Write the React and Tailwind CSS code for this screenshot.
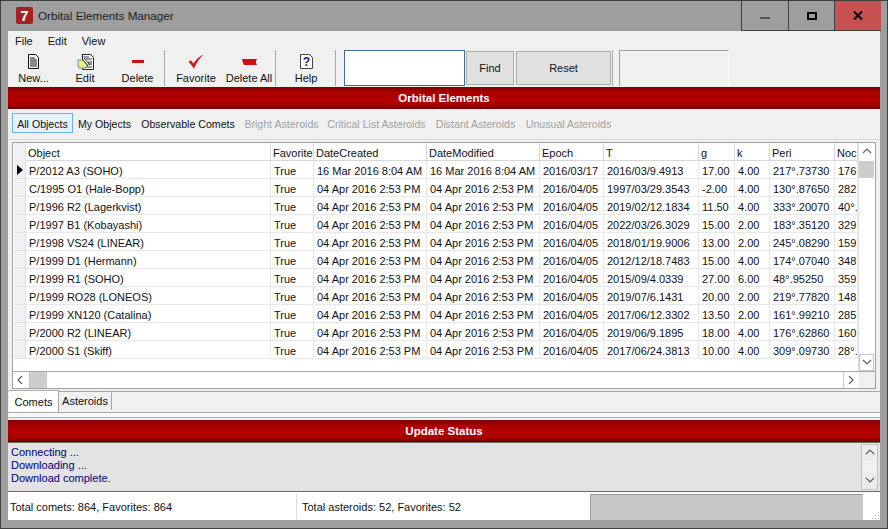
import React from "react";

const columns = [
  { name: "Object", w: "w-[245px]" },
  { name: "Favorite", w: "w-[43px]" },
  { name: "DateCreated", w: "w-[113px]" },
  { name: "DateModified", w: "w-[113px]" },
  { name: "Epoch", w: "w-[64px]" },
  { name: "T", w: "w-[95px]" },
  { name: "g", w: "w-[36px]" },
  { name: "k", w: "w-[35px]" },
  { name: "Peri", w: "w-[65px]" },
  { name: "Noc", w: "w-[23px]" },
];

const d = "04 Apr 2016 2:53 PM";
const rows = [
  ["P/2012 A3 (SOHO)", "True", "16 Mar 2016 8:04 AM", "16 Mar 2016 8:04 AM", "2016/03/17", "2016/03/9.4913", "17.00", "4.00", "217°.73730", "176"],
  ["C/1995 O1 (Hale-Bopp)", "True", d, d, "2016/04/05", "1997/03/29.3543", "-2.00", "4.00", "130°.87650", "282"],
  ["P/1996 R2 (Lagerkvist)", "True", d, d, "2016/04/05", "2019/02/12.1834", "11.50", "4.00", "333°.20070", "40°."],
  ["P/1997 B1 (Kobayashi)", "True", d, d, "2016/04/05", "2022/03/26.3029", "15.00", "2.00", "183°.35120", "329"],
  ["P/1998 VS24 (LINEAR)", "True", d, d, "2016/04/05", "2018/01/19.9006", "13.00", "2.00", "245°.08290", "159"],
  ["P/1999 D1 (Hermann)", "True", d, d, "2016/04/05", "2012/12/18.7483", "15.00", "4.00", "174°.07040", "348"],
  ["P/1999 R1 (SOHO)", "True", d, d, "2016/04/05", "2015/09/4.0339", "27.00", "6.00", "48°.95250", "359"],
  ["P/1999 RO28 (LONEOS)", "True", d, d, "2016/04/05", "2019/07/6.1431", "20.00", "2.00", "219°.77820", "148"],
  ["P/1999 XN120 (Catalina)", "True", d, d, "2016/04/05", "2017/06/12.3302", "13.50", "2.00", "161°.99210", "285"],
  ["P/2000 R2 (LINEAR)", "True", d, d, "2016/04/05", "2019/06/9.1895", "18.00", "4.00", "176°.62860", "160"],
  ["P/2000 S1 (Skiff)", "True", d, d, "2016/04/05", "2017/06/24.3813", "10.00", "4.00", "309°.09730", "28°."],
];

const filters = [
  { name: "My Objects", w: "w-[63px]", on: true },
  { name: "Observable Comets", w: "w-[104px]", on: true },
  { name: "Bright Asteroids", w: "w-[83px]" },
  { name: "Critical List Asteroids", w: "w-[107px]" },
  { name: "Distant Asteroids", w: "w-[91px]" },
  { name: "Unusual Asteroids", w: "w-[95px]" },
];

const NewIcon = () => (
  <svg width="13" height="15" viewBox="0 0 13 15">
    <path d="M1.5 0.5h7l3 3v11h-10z" fill="#fff" stroke="#111" />
    <path d="M3 4h5M3 6h7M3 8h7M3 10h7M3 12h7" stroke="#111" />
  </svg>
);

const EditIcon = () => (
  <svg width="17" height="16" viewBox="0 0 17 16">
    <path d="M5.5 0.5h8l3 3v12h-11z" fill="#fff" stroke="#222" />
    <path d="M7 3h5M9 5h6M11 8h4M11 10h4M9 13h6" stroke="#333" />
    <path d="M1 6h5l4 4v3l-3 1H2l-1-2z" fill="#f2ee80" stroke="#4f9a9a" />
    <path d="M5 5l6 7M7 4l6 7" stroke="#333" />
    <path d="M5 0l1 3" stroke="#222" />
  </svg>
);

const DashIcon = () => (
  <svg width="12" height="3" viewBox="0 0 12 3">
    <path d="M0 0h12v3H0z" fill="#cc1111" />
  </svg>
);

const CheckIcon = () => (
  <svg width="16" height="15" viewBox="0 0 16 15">
    <path d="M0.5 7.5l2.5-1 2.5 3C8 5.5 11 2.5 15.5 0.5 11.5 4 8.5 9 6 14.5z" fill="#d01818" />
  </svg>
);

const DeleteAllIcon = () => (
  <svg width="15" height="6" viewBox="0 0 15 6">
    <path d="M0 0h15l-1 2v2l1 2H2L1 4z" fill="#d01010" />
  </svg>
);

const HelpIcon = () => (
  <svg width="13" height="15" viewBox="0 0 13 15">
    <path d="M0.5 0.5h9l3 3v11h-12z" fill="#fffff0" stroke="#444" />
    <text x="6.5" y="12" textAnchor="middle" fontSize="12" fontWeight="700" fill="#14148c" fontFamily="Liberation Sans">?</text>
  </svg>
);

const Chevron = ({ dir }) => {
  const p = {
    up: "M1 6l4-4 4 4",
    down: "M1 2l4 4 4-4",
    left: "M6 1L2 5l4 4",
    right: "M2 1l4 4-4 4",
  }[dir];
  return (
    <svg width="10" height="10" viewBox="0 0 10 10" className="overflow-visible">
      <path d={p} fill="none" stroke="#606060" strokeWidth="1.2" />
    </svg>
  );
};

const ToolButton = ({ label, w, icon }) => (
  <div className={`${w} h-[37px] flex flex-col items-center shrink-0 whitespace-nowrap`}>
    <div className="h-[19px] mt-[2px] flex items-center justify-center">{icon}</div>
    <span className="mt-[1px] leading-[13px]">{label}</span>
  </div>
);

const Sep = () => <div className="w-[1px] h-[36px] bg-[#a8a8a8] shrink-0" />;

const RedBar = ({ title }) => (
  <div className="h-[22px] pt-[2px] shrink-0 flex items-center justify-center text-white font-bold text-[11.5px] bg-[linear-gradient(#7c0000,#ac0000_25%,#b40000_60%,#a80000_80%,#6e0000)]">
    {title}
  </div>
);

const App = () => {
  return (
    <div className="w-[888px] h-[529px] flex flex-col bg-[#9e9e9e] border border-[#3f3f3f] overflow-hidden font-['Liberation_Sans',sans-serif] text-[11px] text-[#111]">
      {/* title bar */}
      <div className="h-[30px] shrink-0 flex items-start">
        <div className="ml-[15px] mt-[6px] w-[17px] h-[17px] rounded-[2px] bg-[#a32020] text-white font-bold text-[15px] leading-[17px] text-center">
          7
        </div>
        <span className="ml-[5px] mt-[8px] text-[11.7px] leading-[14px] text-[#1c1c1c]">Orbital Elements Manager</span>
        <div className="ml-auto mr-[6px] flex h-[30px] border-b border-[#3f3f3f]">
          <div className="w-[48px] border-x border-[#3f3f3f] flex justify-center">
            <div className="mt-[16px] w-[10px] h-[2px] bg-[#555]" />
          </div>
          <div className="w-[46px] border-r border-[#3f3f3f] flex justify-center">
            <div className="mt-[11px] w-[10px] h-[8px] border-2 border-black" />
          </div>
          <div className="w-[46px] bg-[#c75050] flex justify-center">
            <svg className="mt-[10px]" width="10" height="9" viewBox="0 0 10 9">
              <path d="M1 0.5l8 8M9 0.5l-8 8" stroke="#000" strokeWidth="2" />
            </svg>
          </div>
        </div>
      </div>

      {/* client area */}
      <div className="mx-[7px] h-[489px] shrink-0 flex flex-col bg-[#f0f0f0]">
        <div className="h-[19px] shrink-0 flex items-center gap-[15px] pl-[7px] pt-[2px]">
          <span>File</span>
          <span>Edit</span>
          <span>View</span>
        </div>

        <div className="h-[37px] shrink-0 flex items-start">
          <ToolButton label="New..." w="w-[51px]" icon={<NewIcon />} />
          <ToolButton label="Edit" w="w-[52px]" icon={<EditIcon />} />
          <ToolButton label="Delete" w="w-[53px]" icon={<DashIcon />} />
          <Sep />
          <div className="w-[4px]" />
          <ToolButton label="Favorite" w="w-[54px]" icon={<CheckIcon />} />
          <ToolButton label="Delete All" w="w-[52px]" icon={<DeleteAllIcon />} />
          <Sep />
          <div className="w-[1px]" />
          <ToolButton label="Help" w="w-[58px]" icon={<HelpIcon />} />
          <Sep />
          <div className="w-[8px]" />
          <div className="w-[121px] h-[36px] bg-white border border-[#44708f] shrink-0" />
          <div className="ml-[1px] w-[48px] h-[34px] mt-[1px] pt-[1px] bg-[#e1e1e1] border border-[#adadad] flex items-center justify-center shrink-0">
            Find
          </div>
          <div className="ml-[2px] w-[95px] h-[34px] mt-[1px] bg-[#e1e1e1] border border-[#adadad] flex items-center justify-center shrink-0">
            Reset
          </div>
          <div className="ml-[1px]"><Sep /></div>
          <div className="ml-[6px] w-[110px] h-[36px] border-t border-l border-[#a0a0a0] border-r-white border-r shrink-0" />
        </div>

        <RedBar title="Orbital Elements" />

        {/* filter strip */}
        <div className="h-[31px] shrink-0 flex items-start pl-[4px] pt-[4px] text-[10.6px] text-[#a3a3a3] border-b border-[#d8d8d8] whitespace-nowrap">
          <div className="w-[61px] h-[20px] pt-[3px] shrink-0 bg-[#e5f1fb] border border-[#6eb0de] text-[#111] flex items-center justify-center">
            All Objects
          </div>
          {filters.map((f) => (
            <div key={f.name} className={`${f.w} h-[20px] pt-[3px] shrink-0 flex items-center justify-center ${f.on ? "text-[#111]" : ""}`}>
              {f.name}
            </div>
          ))}
        </div>

        {/* grid */}
        <div className="mx-[4px] mt-[2px] h-[247px] shrink-0 border border-[#a0a0a0] bg-white flex flex-col">
          <div className="flex flex-1 min-h-0">
            <div className="w-[845px] shrink-0">
              <div className="flex h-[18px]">
                <div className="w-[12px] shrink-0 bg-[#f0f0f0] border-r border-[#e0e0e0] ml-[1px]" />
                {columns.map((c) => (
                  <div key={c.name} className={`${c.w} shrink-0 bg-white border-r border-b border-[#d8d8d8] pl-[2px] leading-[20px] overflow-hidden whitespace-nowrap`}>
                    {c.name}
                  </div>
                ))}
              </div>
              {rows.map((r, i) => (
                <div key={r[0]} className="flex h-[18px]">
                  <div className="w-[12px] ml-[1px] shrink-0 bg-[#f0f0f0] border-r border-b border-[#e0e0e0] flex items-center justify-center">
                    {i === 0 && (
                      <svg width="6" height="10" viewBox="0 0 6 10">
                        <path d="M0 0l6 5-6 5z" fill="#000" />
                      </svg>
                    )}
                  </div>
                  {r.map((v, j) => (
                    <div key={j} className={`${columns[j].w} shrink-0 border-r border-b border-[#e8e8e8] pl-[3px] leading-[20px] overflow-hidden whitespace-nowrap`}>
                      {v}
                    </div>
                  ))}
                </div>
              ))}
            </div>
            <div className="w-[16px] shrink-0 flex flex-col border-l border-[#e0e0e0]">
              <div className="h-[18px] flex items-center justify-center bg-white"><Chevron dir="up" /></div>
              <div className="h-[17px] bg-[#cdcdcd]" />
              <div className="flex-1" />
              <div className="h-[17px] flex items-center justify-center border border-[#c8c8c8]"><Chevron dir="down" /></div>
            </div>
          </div>
          <div className="h-[17px] shrink-0 flex border-t border-[#a8a8a8]">
            <div className="w-[17px] flex items-center justify-center border-r border-[#c8c8c8]"><Chevron dir="left" /></div>
            <div className="w-[17px] bg-[#cdcdcd]" />
            <div className="flex-1" />
            <div className="w-[16px] flex items-center justify-center border-l border-[#c8c8c8]"><Chevron dir="right" /></div>
            <div className="w-[16px] bg-[#f0f0f0]" />
          </div>
        </div>

        {/* tabs */}
        <div className="mt-[2px] h-[22px] shrink-0 flex items-start border-t border-b border-[#a8a8a8]">
          <div className="w-[50px] h-[22px] -mt-[2px] ml-[1px] pt-[2px] bg-white border-r border-t border-[#a8a8a8] flex items-center justify-center">Comets</div>
          <div className="w-[53px] h-[18px] bg-[#f0f0f0] border-r border-[#a8a8a8] flex items-center justify-center">Asteroids</div>
        </div>
        <div className="h-[5px] shrink-0 bg-[#f8f8f8] border-b border-[#b0b0b0]" />
        <div className="h-[2px] shrink-0" />

        <RedBar title="Update Status" />

        {/* status log */}
        <div className="h-[50px] shrink-0 flex bg-[#e3e3e3] border-t border-b border-[#6a6a6a]">
          <div className="flex-1 pl-[3px] pt-[3px] text-[#000080] leading-[13px]">
            <div>Connecting ...</div>
            <div>Downloading ...</div>
            <div>Download complete.</div>
          </div>
          <div className="w-[17px] mr-[2px] mt-[1px] mb-[1px] shrink-0 flex flex-col bg-white border border-[#c4c4c4]">
            <div className="h-[16px] flex items-center justify-center bg-[#ececec]"><Chevron dir="up" /></div>
            <div className="flex-1 bg-[#f0f0f0]" />
            <div className="h-[17px] flex items-center justify-center bg-[#ececec]"><Chevron dir="down" /></div>
          </div>
        </div>

        {/* status bar */}
        <div className="flex-1 flex bg-white pt-[2px]">
          <div className="w-[289px] shrink-0 pl-[2px] leading-[22px] pt-[2px] border-r border-[#dcdcdc]">Total comets: 864, Favorites: 864</div>
          <div className="w-[293px] shrink-0 pl-[5px] leading-[22px] pt-[2px]">Total asteroids: 52, Favorites: 52</div>
          <div className="w-[273px] shrink-0 bg-[#c8c8c8] border-t border-l border-[#9c9c9c]" />
          <div className="flex-1 flex items-end justify-end">
            <svg width="9" height="9" viewBox="0 0 9 9">
              <path d="M7 1h1v1H7zM4 4h1v1H4zM7 4h1v1H7zM1 7h1v1H1zM4 7h1v1H4zM7 7h1v1H7z" fill="#b0b0b0" />
            </svg>
          </div>
        </div>
      </div>
    </div>
  );
};

export default App;
